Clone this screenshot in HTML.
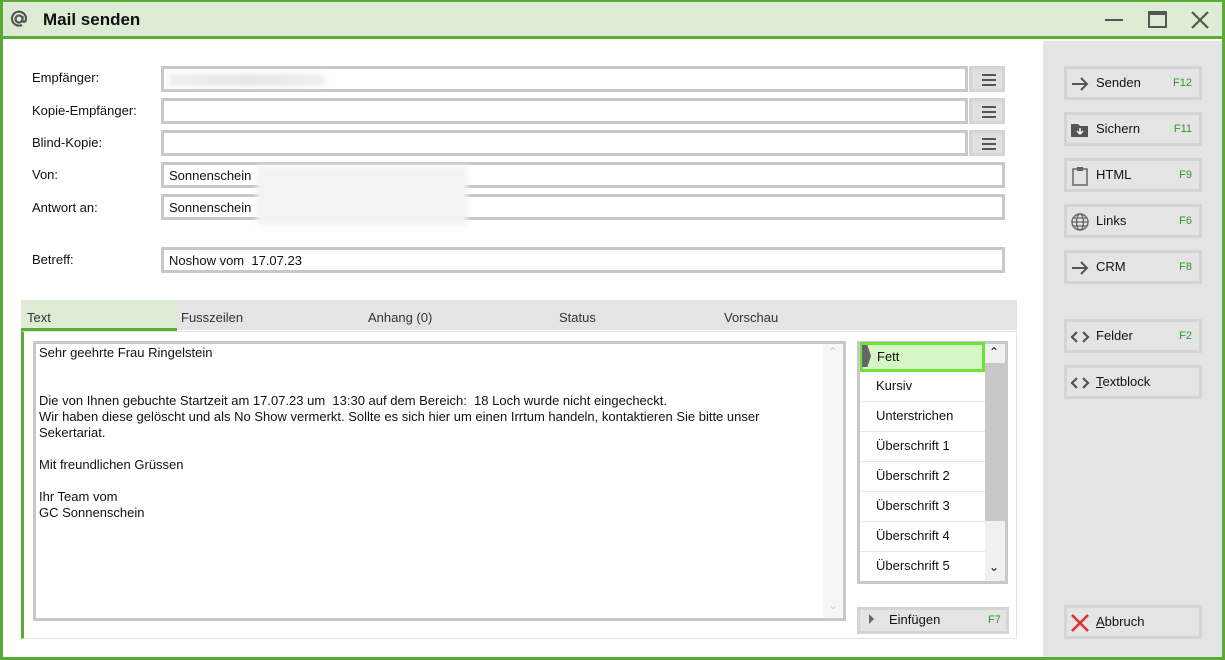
<!DOCTYPE html>
<html><head><meta charset="utf-8"><style>
*{box-sizing:border-box;margin:0;padding:0}
body{width:1225px;height:660px;overflow:hidden;font-family:"Liberation Sans","DejaVu Sans",sans-serif;font-size:13px;color:#111;background:#fff;position:relative}
.a{position:absolute}
.frame{left:0;top:0;width:1225px;height:660px;border:3px solid #5aaa35;border-top-width:2px}
.title{left:3px;top:2px;width:1219px;height:37px;background:#deebd4;border-bottom:3px solid #5aaa35}
.side{left:1043px;top:41px;width:179px;height:616px;background:#e4e4e4}
.lbl{left:32px;font-size:13px}
.inp{border:3px solid #c8c8c8;background:#fff;height:26px;padding:3px 5px;font-size:13px}
.mb{width:36px;height:26px;background:#e0e0e0;border:3px solid #d4d4d4}
.mb i{position:absolute;left:10px;width:14px;height:2px;background:#555}
.btn{left:1064px;width:138px;height:34px;border:3px solid #d4d4d4;background:#e4e4e4;font-size:13px}
.btn .t{position:absolute;left:29px;top:6px}
.btn .k{position:absolute;right:7px;top:8px;color:#2a9a2a;font-size:11px}
.btn svg{position:absolute;left:3px;top:5px}
.tab{top:300px;height:30px;padding:10px 0 0 6px;font-size:13px;color:#333}
.li{left:860px;width:125px;height:30px;border-bottom:1px solid #e4e4e4;padding:6px 0 0 16px;background:#fff}
.blur{background:linear-gradient(90deg,#eee,#e4e4e4,#eee);filter:blur(3px);height:12px}
</style></head><body>
<div class="a frame"></div>
<div class="a title"></div>
<svg class="a" style="left:9px;top:9px" width="20" height="20" viewBox="0 0 20 20"><circle cx="10" cy="10" r="3.5" fill="none" stroke="#555" stroke-width="2.2"/><path d="M13.5 7v4.5c0 2 3.5 2 3.5-1.5A7 7 0 1 0 13 16" fill="none" stroke="#555" stroke-width="2.2"/></svg>
<div class="a" style="left:43px;top:10px;font-size:17px;font-weight:bold">Mail senden</div>
<div class="a" style="left:1105px;top:19px;width:18px;height:2px;background:#555"></div>
<div class="a" style="left:1148px;top:11px;width:19px;height:17px;border:2px solid #555;border-top-width:4px"></div>
<svg class="a" style="left:1190px;top:10px" width="20" height="20"><path d="M2 2L18 18M18 2L2 18" stroke="#555" stroke-width="2.2"/></svg>
<div class="a side"></div>

<div class="a lbl" style="top:70px">Empfänger:</div>
<div class="a lbl" style="top:103px">Kopie-Empfänger:</div>
<div class="a lbl" style="top:135px">Blind-Kopie:</div>
<div class="a lbl" style="top:167px">Von:</div>
<div class="a lbl" style="top:200px">Antwort an:</div>
<div class="a lbl" style="top:252px">Betreff:</div>

<div class="a inp" style="left:161px;top:66px;width:807px"><div class="blur" style="width:155px;margin-top:2px"></div></div>
<div class="a inp" style="left:161px;top:98px;width:807px"></div>
<div class="a inp" style="left:161px;top:130px;width:807px"></div>
<div class="a mb" style="left:969px;top:66px"><i style="top:5px"></i><i style="top:10px"></i><i style="top:15px"></i></div>
<div class="a mb" style="left:969px;top:98px"><i style="top:5px"></i><i style="top:10px"></i><i style="top:15px"></i></div>
<div class="a mb" style="left:969px;top:130px"><i style="top:5px"></i><i style="top:10px"></i><i style="top:15px"></i></div>
<div class="a inp" style="left:161px;top:162px;width:844px">Sonnenschein</div>
<div class="a inp" style="left:161px;top:194px;width:844px">Sonnenschein</div>
<div class="a" style="left:257px;top:166px;width:210px;height:60px;background:#f3f3f3;filter:blur(3px)"></div>
<div class="a inp" style="left:161px;top:247px;width:844px">Noshow vom &nbsp;17.07.23</div>

<div class="a" style="left:21px;top:300px;width:996px;height:30px;background:#e4e4e4"></div>
<div class="a tab" style="left:21px;width:156px;background:#deebd4;border-bottom:3px solid #5aaa35;height:31px">Text</div>
<div class="a tab" style="left:175px">Fusszeilen</div>
<div class="a tab" style="left:362px">Anhang (0)</div>
<div class="a tab" style="left:553px">Status</div>
<div class="a tab" style="left:718px">Vorschau</div>
<div class="a" style="left:21px;top:331px;width:996px;height:308px;border:1px solid #deebd4;border-left:3px solid #5aaa35;background:#fff"></div>

<div class="a" style="left:33px;top:341px;width:813px;height:280px;border:3px solid #c8c8c8;background:#fff;padding:1px 3px;font-size:13px;line-height:16px">
Sehr geehrte Frau Ringelstein<br><br><br>Die von Ihnen gebuchte Startzeit am 17.07.23 um &nbsp;13:30 auf dem Bereich: &nbsp;18 Loch wurde nicht eingecheckt.<br>Wir haben diese gelöscht und als No Show vermerkt. Sollte es sich hier um einen Irrtum handeln, kontaktieren Sie bitte unser<br>Sekertariat.<br><br>Mit freundlichen Grüssen<br><br>Ihr Team vom<br>GC Sonnenschein</div>
<div class="a" style="left:823px;top:344px;width:20px;height:274px;background:#f6f6f6"></div>
<div class="a" style="left:828px;top:345px;color:#ccc;font-size:12px">⌃</div>
<div class="a" style="left:828px;top:598px;color:#ccc;font-size:12px">⌄</div>

<div class="a" style="left:857px;top:341px;width:151px;height:243px;border:3px solid #c8c8c8;background:#fff"></div>
<div class="a" style="left:985px;top:344px;width:20px;height:237px;background:#f0f0f0"></div>
<div class="a" style="left:985px;top:363px;width:20px;height:158px;background:#c8c8c8"></div>
<div class="a" style="left:989px;top:345px;font-size:12px">⌃</div>
<div class="a" style="left:989px;top:560px;font-size:12px">⌄</div>
<div class="a li" style="top:342px;background:#d5f7c5;border:3px solid #6ee23a;padding:4px 0 0 14px">Fett</div>
<div class="a" style="left:862px;top:345px;width:9px;height:22px;background:#666;clip-path:polygon(0 0,60% 0,100% 50%,60% 100%,0 100%)"></div>
<div class="a li" style="top:372px">Kursiv</div>
<div class="a li" style="top:402px">Unterstrichen</div>
<div class="a li" style="top:432px">Überschrift 1</div>
<div class="a li" style="top:462px">Überschrift 2</div>
<div class="a li" style="top:492px">Überschrift 3</div>
<div class="a li" style="top:522px">Überschrift 4</div>
<div class="a li" style="top:552px;border:0;height:28px">Überschrift 5</div>

<div class="a" style="left:857px;top:607px;width:152px;height:27px;background:#e4e4e4;border:3px solid #d4d4d4"></div>
<div class="a" style="left:869px;top:614px;width:0;height:0;border-left:5px solid #666;border-top:5px solid transparent;border-bottom:5px solid transparent"></div>
<div class="a" style="left:889px;top:612px">Einfügen</div>
<div class="a" style="left:988px;top:614px;color:#2a9a2a;font-size:11px">F7</div>

<div class="a btn" style="top:66px"><svg width="20" height="20"><path d="M2 10H17M11 4L17 10L11 16" fill="none" stroke="#555" stroke-width="2"/></svg><span class="t">Senden</span><span class="k">F12</span></div>
<div class="a btn" style="top:112px"><svg width="20" height="20"><path d="M1 4h7l2 2h8v11H1z" fill="#555"/><path d="M10 8v6M7 11l3 3 3-3" stroke="#fff" stroke-width="1.5" fill="none"/></svg><span class="t">Sichern</span><span class="k">F11</span></div>
<div class="a btn" style="top:158px"><svg width="20" height="20"><rect x="3" y="3" width="14" height="16" fill="none" stroke="#666" stroke-width="1.5"/><rect x="7" y="1" width="6" height="4" fill="#666"/></svg><span class="t">HTML</span><span class="k">F9</span></div>
<div class="a btn" style="top:204px"><svg width="20" height="20"><circle cx="10" cy="10" r="8" fill="none" stroke="#666" stroke-width="1.4"/><ellipse cx="10" cy="10" rx="3.5" ry="8" fill="none" stroke="#666" stroke-width="1.4"/><path d="M2 10h16M3.5 6h13M3.5 14h13" stroke="#666" stroke-width="1.2"/></svg><span class="t">Links</span><span class="k">F6</span></div>
<div class="a btn" style="top:250px"><svg width="20" height="20"><path d="M2 10H17M11 4L17 10L11 16" fill="none" stroke="#555" stroke-width="2"/></svg><span class="t">CRM</span><span class="k">F8</span></div>
<div class="a btn" style="top:319px"><svg width="20" height="20"><path d="M7 5L2 10L7 15M13 5L18 10L13 15" fill="none" stroke="#555" stroke-width="2.2"/></svg><span class="t">Felder</span><span class="k">F2</span></div>
<div class="a btn" style="top:365px"><svg width="20" height="20"><path d="M7 5L2 10L7 15M13 5L18 10L13 15" fill="none" stroke="#555" stroke-width="2.2"/></svg><span class="t"><u>T</u>extblock</span></div>
<div class="a btn" style="top:605px"><svg width="20" height="20"><path d="M2 2L18 18M18 2L2 18" stroke="#e03030" stroke-width="2.6"/></svg><span class="t"><u>A</u>bbruch</span></div>
</body></html>
